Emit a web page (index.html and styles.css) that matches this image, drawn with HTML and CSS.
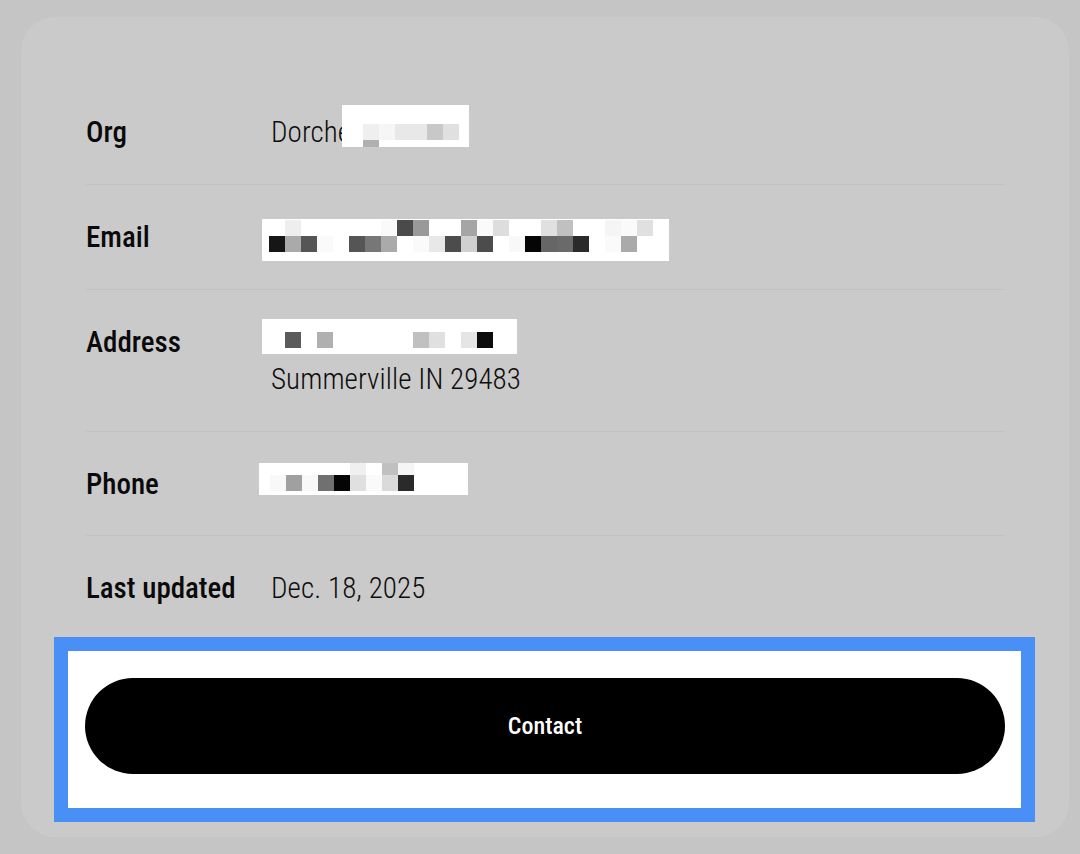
FILE: index.html
```html
<!DOCTYPE html>
<html lang="en">
<head>
<meta charset="utf-8">
<title>Contact details</title>
<link rel="stylesheet" href="styles.css">
</head>
<body>
<main class="card">
  <dl class="details">
    <div class="row">
      <dt class="label">Org</dt>
      <dd class="value">
        <span class="org-text">Dorche</span>
        <svg class="redact redact-org" width="127" height="42" viewBox="0 0 127 42" shape-rendering="crispEdges" aria-hidden="true">
          <rect width="127" height="42" fill="#fff"/>
          <rect x="21" y="19" width="16" height="16" fill="#efefef"/>
          <rect x="37" y="19" width="16" height="16" fill="#f6f6f6"/>
          <rect x="53" y="19" width="16" height="16" fill="#e8e8e8"/>
          <rect x="69" y="19" width="16" height="16" fill="#e8e8e8"/>
          <rect x="85" y="19" width="16" height="16" fill="#c8c8c8"/>
          <rect x="101" y="19" width="16" height="16" fill="#e0e0e0"/>
          <rect x="21" y="35" width="16" height="7" fill="#b0b0b0"/>
        </svg>
      </dd>
    </div>
    <div class="row">
      <dt class="label">Email</dt>
      <dd class="value">
        <svg class="redact redact-email" width="407" height="42" viewBox="0 0 407 42" shape-rendering="crispEdges" aria-hidden="true">
          <rect width="407" height="42" fill="#fff"/>
          <rect x="23" y="1" width="16" height="16" fill="#eeeeee"/>
          <rect x="119" y="1" width="16" height="16" fill="#fafafa"/>
          <rect x="135" y="1" width="16" height="16" fill="#4a4a4a"/>
          <rect x="151" y="1" width="16" height="16" fill="#999999"/>
          <rect x="199" y="1" width="16" height="16" fill="#a5a5a5"/>
          <rect x="215" y="1" width="16" height="16" fill="#fafafa"/>
          <rect x="231" y="1" width="16" height="16" fill="#dddddd"/>
          <rect x="279" y="1" width="16" height="16" fill="#e0e0e0"/>
          <rect x="295" y="1" width="16" height="16" fill="#c0c0c0"/>
          <rect x="343" y="1" width="16" height="16" fill="#f5f5f5"/>
          <rect x="359" y="1" width="16" height="16" fill="#fafafa"/>
          <rect x="375" y="1" width="16" height="16" fill="#e0e0e0"/>
          <rect x="7" y="17" width="16" height="16" fill="#161616"/>
          <rect x="23" y="17" width="16" height="16" fill="#aaaaaa"/>
          <rect x="39" y="17" width="16" height="16" fill="#555555"/>
          <rect x="55" y="17" width="16" height="16" fill="#fafafa"/>
          <rect x="87" y="17" width="16" height="16" fill="#555555"/>
          <rect x="103" y="17" width="16" height="16" fill="#777777"/>
          <rect x="119" y="17" width="16" height="16" fill="#aaaaaa"/>
          <rect x="151" y="17" width="16" height="16" fill="#fafafa"/>
          <rect x="167" y="17" width="16" height="16" fill="#e8e8e8"/>
          <rect x="183" y="17" width="16" height="16" fill="#4c4c4c"/>
          <rect x="199" y="17" width="16" height="16" fill="#d0d0d0"/>
          <rect x="215" y="17" width="16" height="16" fill="#4c4c4c"/>
          <rect x="247" y="17" width="16" height="16" fill="#f8f8f8"/>
          <rect x="263" y="17" width="16" height="16" fill="#050505"/>
          <rect x="279" y="17" width="16" height="16" fill="#666666"/>
          <rect x="295" y="17" width="16" height="16" fill="#6a6a6a"/>
          <rect x="311" y="17" width="16" height="16" fill="#2a2a2a"/>
          <rect x="343" y="17" width="16" height="16" fill="#fafafa"/>
          <rect x="359" y="17" width="16" height="16" fill="#aaaaaa"/>
        </svg>
      </dd>
    </div>
    <div class="row">
      <dt class="label">Address</dt>
      <dd class="value value-stack">
        <svg class="redact redact-address" width="255" height="35" viewBox="0 0 255 35" shape-rendering="crispEdges" aria-hidden="true">
          <rect width="255" height="35" fill="#fff"/>
          <rect x="23" y="13" width="16" height="16" fill="#5a5a5a"/>
          <rect x="55" y="13" width="16" height="16" fill="#b0b0b0"/>
          <rect x="151" y="13" width="16" height="16" fill="#c0c0c0"/>
          <rect x="167" y="13" width="16" height="16" fill="#e0e0e0"/>
          <rect x="199" y="13" width="16" height="16" fill="#e5e5e5"/>
          <rect x="215" y="13" width="16" height="16" fill="#0c0c0c"/>
        </svg>
        <span class="line">Summerville IN 29483</span>
      </dd>
    </div>
    <div class="row row-phone">
      <dt class="label">Phone</dt>
      <dd class="value">
        <svg class="redact redact-phone" width="209" height="32" viewBox="0 0 209 32" shape-rendering="crispEdges" aria-hidden="true">
          <rect width="209" height="32" fill="#fff"/>
          <rect x="91" y="0" width="16" height="12" fill="#f0f0f0"/>
          <rect x="123" y="0" width="16" height="12" fill="#c0c0c0"/>
          <rect x="139" y="0" width="16" height="12" fill="#f5f5f5"/>
          <rect x="11" y="12" width="16" height="16" fill="#f8f8f8"/>
          <rect x="27" y="12" width="16" height="16" fill="#a0a0a0"/>
          <rect x="43" y="12" width="16" height="16" fill="#f8f8f8"/>
          <rect x="59" y="12" width="16" height="16" fill="#707070"/>
          <rect x="75" y="12" width="16" height="16" fill="#050505"/>
          <rect x="91" y="12" width="16" height="16" fill="#e0e0e0"/>
          <rect x="107" y="12" width="16" height="16" fill="#fafafa"/>
          <rect x="123" y="12" width="16" height="16" fill="#dadada"/>
          <rect x="139" y="12" width="16" height="16" fill="#2a2a2a"/>
        </svg>
      </dd>
    </div>
    <div class="row">
      <dt class="label">Last updated</dt>
      <dd class="value">Dec. 18, 2025</dd>
    </div>
  </dl>
  <div class="footer">
    <button class="contact" type="button">Contact</button>
  </div>
</main>
</body>
</html>
```

FILE: styles.css
```css
html, body {
  margin: 0;
}

body {
  background: #c5c5c5;
  padding: 17px 11px 17px 21px;
  font-family: Roboto, "Liberation Sans", Arial, sans-serif;
  font-stretch: 75%;
  color: #111;
}

.card {
  background: #cacaca;
  border-radius: 34px;
  padding: 63px 64px 15px 65px;
}

.details {
  margin: 0;
}

.row {
  display: flex;
  padding: 33px 0;
  border-bottom: 1px solid #c1c1c1;
}

.row-phone {
  padding-bottom: 32px;
}

.row:last-child {
  border-bottom: 0;
  padding-bottom: 30px;
}

.label {
  width: 185px;
  flex: none;
  font-size: 29px;
  line-height: 38px;
  font-weight: 500;
  color: #0a0a0a;
}

.value {
  margin: 0;
  display: flex;
  align-items: flex-start;
  font-size: 29px;
  line-height: 38px;
  font-weight: 300;
  letter-spacing: 0.1px;
  color: #0d0d0d;
}

.value-stack {
  flex-direction: column;
}

.value-stack .line {
  line-height: 37px;
}

.redact {
  display: block;
  flex: none;
}

.redact-org {
  margin: -8px 0 0 -9px;
}

.redact-email {
  margin: 1px 0 -5px -9px;
}

.redact-address {
  margin: -4px 0 7px -9px;
}

.redact-phone {
  margin: -2px 0 8px -12px;
}

.footer {
  margin: 0 -30px 0 -32px;
  border: 14px solid #4a8ff5;
  background: #fff;
  padding: 27px 16px 34px 17px;
}

.contact {
  display: block;
  width: 100%;
  height: 96px;
  border: 0;
  border-radius: 48px;
  background: #000;
  color: #fff;
  font-family: Roboto, "Liberation Sans", Arial, sans-serif;
  font-stretch: 75%;
  font-size: 24px;
  font-weight: 500;
  cursor: pointer;
}
```
